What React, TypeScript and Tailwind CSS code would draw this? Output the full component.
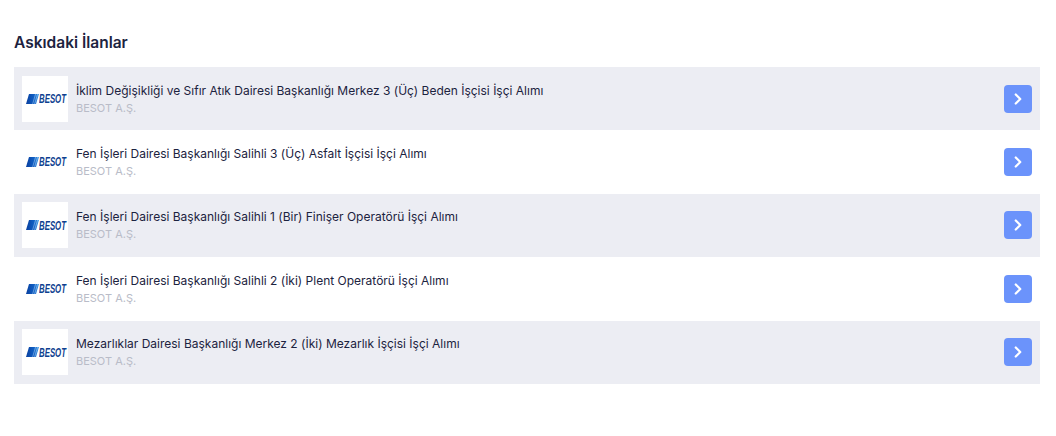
import React from "react";
import { ChevronRight } from "lucide-react";

const JOBS = [
  "İklim Değişikliği ve Sıfır Atık Dairesi Başkanlığı Merkez 3 (Üç) Beden İşçisi İşçi Alımı",
  "Fen İşleri Dairesi Başkanlığı Salihli 3 (Üç) Asfalt İşçisi İşçi Alımı",
  "Fen İşleri Dairesi Başkanlığı Salihli 1 (Bir) Finişer Operatörü İşçi Alımı",
  "Fen İşleri Dairesi Başkanlığı Salihli 2 (İki) Plent Operatörü İşçi Alımı",
  "Mezarlıklar Dairesi Başkanlığı Merkez 2 (İki) Mezarlık İşçisi İşçi Alımı",
];

const BesotLogo = () => (
  <div className="flex h-[46px] w-[46px] shrink-0 items-center bg-white pl-1">
    <svg width="13" height="10" viewBox="0 0 13 10" className="shrink-0">
      <defs>
        <linearGradient id="besot-bar" x1="0" x2="1" y1="0" y2="0">
          <stop offset="0" stopColor="#0a3f9e" />
          <stop offset="0.6" stopColor="#0f5fc4" />
          <stop offset="1" stopColor="#3f9be8" />
        </linearGradient>
      </defs>
      <polygon points="3,0 13,0 10,10 0,10" fill="url(#besot-bar)" />
      <path d="M9.6 0 L6.6 10 M11.6 0 L8.6 10" stroke="#ffffff" strokeWidth="0.5" opacity="0.7" />
    </svg>
    <div className="w-[27px] shrink-0">
      <span className="block origin-left scale-x-[0.58] font-['Liberation_Sans',sans-serif] text-[13.5px] leading-none font-bold whitespace-nowrap text-[#0d3f8f] italic">
        BESOT
      </span>
    </div>
  </div>
);

const JobRow = ({ title, shaded }: { title: string; shaded: boolean }) => (
  <div className={`flex h-[63.4px] items-center px-2 ${shaded ? "bg-[#ecedf3]" : "bg-white"}`}>
    <BesotLogo />
    <div className="ml-2 min-w-0 flex-1">
      <div className="text-[12px] leading-[18px] text-[#1c2340]">{title}</div>
      <div className="text-[11px] leading-[16px] text-[#b9bcc8]">BESOT A.Ş.</div>
    </div>
    <button type="button" className="flex h-7 w-7 items-center justify-center rounded-[4px] bg-[#6b93fb] text-white">
      <ChevronRight size={18} strokeWidth={3} />
    </button>
  </div>
);

export default function App() {
  return (
    <div className="h-[436px] w-[1056px] bg-white pt-[33px] pr-4 pl-[14px] font-['Inter',sans-serif]">
      <h2 className="mb-[14px] text-[15.5px] leading-5 font-semibold text-[#1c2340]">Askıdaki İlanlar</h2>
      <div className="flex flex-col">
        {JOBS.map((title, i) => (
          <JobRow key={i} title={title} shaded={i % 2 === 0} />
        ))}
      </div>
    </div>
  );
}
